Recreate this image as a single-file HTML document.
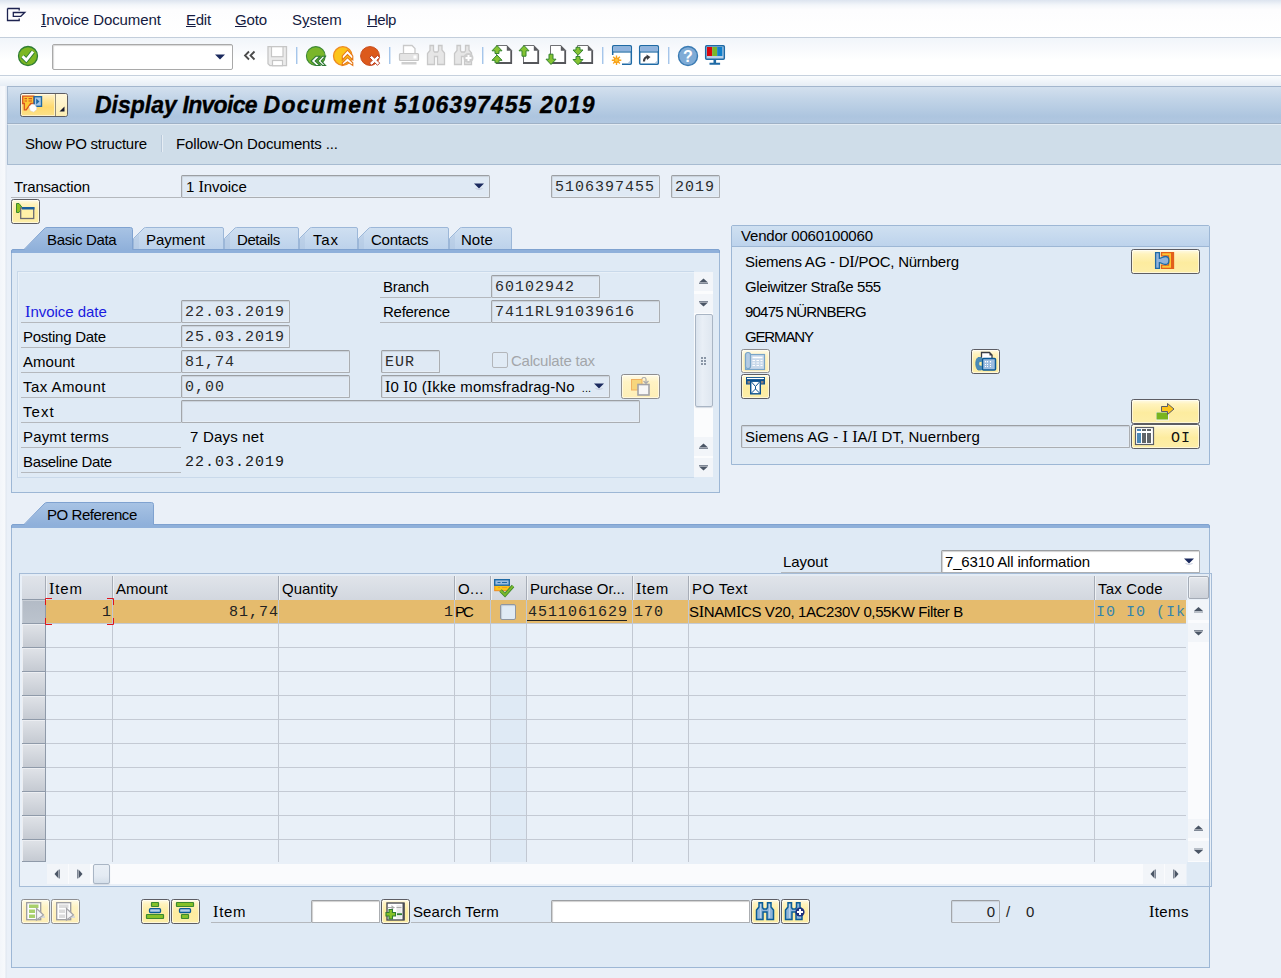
<!DOCTYPE html><html><head><meta charset="utf-8"><title>Display Invoice Document</title><style>
*{box-sizing:border-box;margin:0;padding:0}
html,body{width:1281px;height:978px;overflow:hidden}
body{position:relative;background:#eaf0f8;font-family:"Liberation Sans",sans-serif;font-size:15px;color:#000}
.a{position:absolute}
.i{font-family:"Liberation Serif",serif;font-size:16.2px;line-height:1px}
.t{position:absolute;white-space:nowrap;height:23px;line-height:23px;font-size:15px}
.m{font-family:"Liberation Mono",monospace;font-size:15px;letter-spacing:1px}
.t.m{padding-top:1px}
.lbl{position:absolute;white-space:nowrap;height:23px;line-height:23px;border-bottom:1px solid #b4b8bd;font-size:15px}
.f{position:absolute;height:23px;border:1px solid #abaeb2;border-top-color:#9c9fa3;border-left-color:#a3a6aa;border-radius:1.5px;background:#dfe9f4;box-shadow:inset 0 1px 1px #c9d1da, inset 1px 0 0 #d3dbe4, inset -1px -1px 0 #e6eef6;font-family:"Liberation Mono",monospace;font-size:15px;letter-spacing:1px;line-height:23.5px;padding-left:3px;white-space:nowrap;overflow:hidden;color:#2c2c2c}
.fs{font-family:"Liberation Sans",sans-serif;font-size:15px;letter-spacing:0;line-height:21px;color:#000}
.w{background:#fff;box-shadow:inset 1px 1px 1px #d0d0d0}
.btn{position:absolute;border:1px solid #5d5d63;border-radius:2.5px;background:linear-gradient(#fffbe6 0,#fff3bd 18%,#fdec9f 55%,#fdeea8 100%);box-shadow:inset 0 0 0 1px rgba(255,255,255,.55)}
.btn.dis{border-color:#8e8e90}
.btn svg{position:absolute;left:0;top:0}
.panel{position:absolute;background:#dfeaf5;border:1px solid #9db7d5}
.sep{position:absolute;width:2px;height:17px;top:47px;background:linear-gradient(90deg,#a6c6ea 50%,#d6e5f6 50%)}
.sbb{position:absolute;background:#f2f5f9}
.hd{position:absolute;top:576px;height:24px;background:linear-gradient(#e0e4ea,#d2d7df);border-left:1px solid #a7adb7;box-shadow:inset 1px 0 0 #eef1f4;line-height:25px;font-size:15px;white-space:nowrap;overflow:hidden;padding-left:3px}
.rs{position:absolute;left:22px;width:24px;height:24px;border-right:1px solid #8f9aa9;border-bottom:1px solid #8f9aa9;background:linear-gradient(#e0e3e8,#c5cad2);box-shadow:inset 1px 1px 0 #eceef2}
</style></head><body>
<div class="a" style="left:0;top:0;width:1281px;height:37px;background:linear-gradient(#dce4ef 0,#f3f6fa 5px,#fdfdfe 10px,#fff 100%)"></div>
<div class="a" style="left:0;top:37px;width:1281px;height:1px;background:#c3cedb"></div>
<div class="a" style="left:0;top:38px;width:1281px;height:37px;background:linear-gradient(#f1f5fa,#fff 60%)"></div>
<div class="a" style="left:0;top:75px;width:1281px;height:1px;background:#c6d1de"></div>
<div class="a" style="left:0;top:76px;width:1281px;height:10px;background:linear-gradient(#fafcfe,#e6edf5)"></div>
<div class="a" style="left:0;top:86px;width:7px;height:892px;background:linear-gradient(90deg,#f3f6fa 0,#f7f9fc 5px,#dfe6ef 6px,#e9eff7 7px)"></div>
<svg class="a" style="left:6px;top:7px" width="22" height="16" viewBox="0 0 22 16"><path d="M1.500 1.500h11.700v2M13.200 11.500v2H1.500V1.500" fill="none" stroke="#1d2350" stroke-width="1.300"></path><path d="M7.300 5.500h11.500l-4 3.800h-7.500z" fill="#fff" stroke="#1d2350" stroke-width="1.300"></path></svg>
<div class="t" style="left: 41px; top: 8px; color: rgb(20, 26, 64); letter-spacing: -0.094px;"><u><span class="i">I</span></u>nvoice Document</div>
<div class="t" style="left: 186px; top: 8px; color: rgb(20, 26, 64); letter-spacing: -0.265px;"><u>E</u>dit</div>
<div class="t" style="left: 235px; top: 8px; color: rgb(20, 26, 64); letter-spacing: -0.183px;"><u>G</u>oto</div>
<div class="t" style="left: 292px; top: 8px; color: rgb(20, 26, 64); letter-spacing: -0.039px;">S<u>y</u>stem</div>
<div class="t" style="left: 367px; top: 8px; color: rgb(20, 26, 64); letter-spacing: -0.519px;"><u>H</u>elp</div>
<svg class="a" style="left:17px;top:45px" width="22" height="22" viewBox="0 0 22 22"><circle cx="11" cy="11" r="9.500" fill="#7cb722" stroke="#2f7d35" stroke-width="1.300"></circle><path d="M5.500 11.300l3.800 3.800 6.700-8.400" fill="none" stroke="#2f7d35" stroke-width="4.600" stroke-linejoin="miter"></path><path d="M5.500 11.300l3.800 3.800 6.700-8.400" fill="none" stroke="#fff" stroke-width="2.800" stroke-linejoin="miter"></path></svg>
<div class="a" style="left:52px;top:44px;width:181px;height:26px;border:1px solid #a9a9a9;border-radius:2px;background:#fff;box-shadow:inset 1px 1px 1px #d8d8d8"></div>
<svg class="a" style="left:214px;top:53px" width="12" height="8" viewBox="0 0 12 8"><path d="M1 1.500h10L6 6.500z" fill="#1b2a5e"></path></svg>
<svg class="a" style="left:243px;top:50px" width="13" height="11" viewBox="0 0 13 11"><path d="M6 1.500L2 5.500 6 9.500M11.500 1.500L7.500 5.500l4 4" fill="none" stroke="#4a4a4a" stroke-width="1.800"></path></svg>
<svg class="a" style="left:267px;top:46px" width="21" height="21" viewBox="0 0 21 21"><path d="M1 .7h18.500v19H3L1 17.700z" fill="#ebebeb" stroke="#c6c6c6" stroke-width="1.3"></path><rect x="4.500" y=".7" width="11.500" height="10" fill="#fff" stroke="#c6c6c6" stroke-width="1.2"></rect><rect x="5.500" y="14.500" width="10" height="5.200" fill="#fff" stroke="#c6c6c6" stroke-width="1.2"></rect></svg>
<div class="sep" style="left:296px"></div>
<div class="sep" style="left:389px"></div>
<div class="sep" style="left:482px"></div>
<div class="sep" style="left:602px"></div>
<div class="sep" style="left:668px"></div>
<svg class="a" style="left:305px;top:45px" width="22" height="22" viewBox="0 0 22 22"><circle cx="10.800" cy="11" r="9.400" fill="#7ab62a" stroke="#3f8a36" stroke-width="1.100"></circle><path d="M11 11.200L6 16l5 4.500h4L10.200 16 15 11.200z M17.500 11.200L12.700 16l4.800 4.500h3L16.200 16l4.300-4.800z" fill="#fff" stroke="#2f7a35" stroke-width="1.100"></path></svg>
<svg class="a" style="left:332px;top:45px" width="22" height="22" viewBox="0 0 22 22"><circle cx="10.800" cy="11" r="9.300" fill="#fcc419" stroke="#ee8a22" stroke-width="1.300"></circle><path d="M15.500 5.200l5.300 5.800v4l-5.300-5.500-5.200 5.500v-4z M15.500 12.700l5.300 5.100v2.700l-5.300-3.700-5.200 3.700v-2.700z" fill="#fff" stroke="#e67817" stroke-width="1.100"></path></svg>
<svg class="a" style="left:359px;top:45px" width="22" height="22" viewBox="0 0 22 22"><circle cx="11" cy="11" r="9.400" fill="#dc5a1c" stroke="#c94c1b" stroke-width="1"></circle><path d="M10.500 12.600l2.200-2.200 2.900 2.800 2.900-2.800 2.200 2.200-2.800 2.700 2.800 2.800-2.200 2.200-2.900-2.800-2.900 2.800-2.200-2.200 2.800-2.800z" fill="#fff" stroke="#b3311a" stroke-width=".9"></path></svg>
<svg class="a" style="left:398px;top:44px" width="22" height="22" viewBox="0 0 22 22"><path d="M5.500 9V1.500h8.500l3 3V9" fill="#fff" stroke="#c9c9c9" stroke-width="1.3"></path><rect x="1.500" y="9.500" width="19" height="7" rx="1" fill="#e4e4e4" stroke="#c6c6c6" stroke-width="1.200"></rect><rect x="15.500" y="11.500" width="3" height="3" fill="#fff"></rect><rect x="3.500" y="18" width="15" height="2.500" fill="#cfcfcf"></rect></svg>
<svg class="a" style="left:426px;top:44px" width="20" height="22" viewBox="0 0 20 22"><path d="M4 1.500h3.500v5l1 1.500h3l1-1.500v-5h3.500v4.500l2.500 3V20.500h-7v-8h-3v8h-7V9.500l2.500-3z" fill="#e6e6e6" stroke="#c8c8c8" stroke-width="1.300"></path></svg>
<svg class="a" style="left:453px;top:44px" width="22" height="22" viewBox="0 0 22 22"><path d="M4 1.500h3.500v5l1 1.500h3l1-1.500v-5h3.500v4.500l2.500 3V20.500h-7v-8h-3v8h-7V9.500l2.500-3z" fill="#e6e6e6" stroke="#c8c8c8" stroke-width="1.300"></path><circle cx="15.500" cy="14" r="5" fill="#cdcdcd"></circle><path d="M12.500 14h6M15.500 11v6" stroke="#fff" stroke-width="2"></path></svg>
<svg class="a" style="left:491px;top:44px" width="22" height="22" viewBox="0 0 22 22"><path d="M5.500 1.500H16l5 5V19.500H5.500z" fill="#fff"></path><path d="M5.500 19V1.500H16" fill="none" stroke="#707175" stroke-width="1"></path><path d="M20.200 6.500V19H5" fill="none" stroke="#55565a" stroke-width="1.800"></path><path d="M15.800 1v5.700h5.700z" fill="#5b5c60"></path><path d="M0 0.5h12v10h-12z" fill="#fff" opacity=".0"></path><path d="M6 1.5l5 5.300h-3v2.7h-4v-2.7h-3z" fill="#85c232" stroke="#35852f" stroke-width="1" stroke-linejoin="round"></path><path d="M0 10h12v9.8h-12z" fill="#fff" opacity=".0"></path><path d="M6 11l5 5.300h-3v2.5h-4v-2.5h-3z" fill="#85c232" stroke="#35852f" stroke-width="1" stroke-linejoin="round"></path></svg>
<svg class="a" style="left:518px;top:44px" width="22" height="22" viewBox="0 0 22 22"><path d="M5.500 1.500H16l5 5V19.500H5.500z" fill="#fff"></path><path d="M5.500 19V1.500H16" fill="none" stroke="#707175" stroke-width="1"></path><path d="M20.200 6.500V19H5" fill="none" stroke="#55565a" stroke-width="1.800"></path><path d="M15.800 1v5.700h5.700z" fill="#5b5c60"></path><path d="M0 0.5h12v12.7h-12z" fill="#fff" opacity=".0"></path><path d="M6 1.5l5 5.300h-3v5.3999999999999995h-4v-5.3999999999999995h-3z" fill="#85c232" stroke="#35852f" stroke-width="1" stroke-linejoin="round"></path></svg>
<svg class="a" style="left:545px;top:44px" width="22" height="22" viewBox="0 0 22 22"><path d="M5.500 1.500H16l5 5V19.500H5.500z" fill="#fff"></path><path d="M5.500 19V1.500H16" fill="none" stroke="#707175" stroke-width="1"></path><path d="M20.200 6.500V19H5" fill="none" stroke="#55565a" stroke-width="1.800"></path><path d="M15.800 1v5.700h5.700z" fill="#5b5c60"></path><path d="M6 20.5l5-5.300h-3v-5.000000000000001h-4v5.000000000000001h-3z" fill="#85c232" stroke="#35852f" stroke-width="1" stroke-linejoin="round"></path></svg>
<svg class="a" style="left:572px;top:44px" width="22" height="22" viewBox="0 0 22 22"><path d="M5.500 1.500H16l5 5V19.500H5.500z" fill="#fff"></path><path d="M5.500 19V1.500H16" fill="none" stroke="#707175" stroke-width="1"></path><path d="M20.200 6.500V19H5" fill="none" stroke="#55565a" stroke-width="1.800"></path><path d="M15.800 1v5.700h5.700z" fill="#5b5c60"></path><path d="M6 11.3l5-5.300h-3v-2.7h-4v2.7h-3z" fill="#85c232" stroke="#35852f" stroke-width="1" stroke-linejoin="round"></path><path d="M6 20.8l5-5.300h-3v-3.000000000000001h-4v3.000000000000001h-3z" fill="#85c232" stroke="#35852f" stroke-width="1" stroke-linejoin="round"></path></svg>
<svg class="a" style="left:611px;top:44px" width="22" height="22" viewBox="0 0 22 22"><rect x="1.7" y="1.7" width="18.6" height="18.6" rx="1" fill="#fff" stroke="#1f6aa5" stroke-width="1.5"></rect><rect x="2.500" y="2.500" width="17" height="5" fill="#8fb3de"></rect><path d="M2 8h18" stroke="#1f6aa5" stroke-width="1.2"></path><rect x="0" y="11" width="11" height="11" fill="#fff"></rect><path d="M5.500 11.500v9.500M.800 16.200h9.500M2.200 12.800l6.700 6.700M8.900 12.800l-6.700 6.700" stroke="#f8a51b" stroke-width="1.400"></path><circle cx="5.500" cy="16.200" r="2.800" fill="#f89c1a"></circle><circle cx="5.500" cy="16.200" r="1.600" fill="#fdc534"></circle><path d="M17 19h2v-2" fill="none" stroke="#9db9d8" stroke-width="1"></path></svg>
<svg class="a" style="left:638px;top:44px" width="22" height="22" viewBox="0 0 22 22"><rect x="1.7" y="1.7" width="18.6" height="18.6" rx="1" fill="#fff" stroke="#1f6aa5" stroke-width="1.5"></rect><rect x="2.500" y="2.500" width="17" height="5" fill="#8fb3de"></rect><path d="M2 8h18" stroke="#1f6aa5" stroke-width="1.2"></path><path d="M6 17.500c0-3.500 1.500-4.500 4-4.500" fill="none" stroke="#3c3c40" stroke-width="2.200"></path><path d="M8.500 10.500l4 2.500-3.500 3z" fill="#3c3c40"></path><path d="M17 19h2v-2" fill="none" stroke="#9db9d8" stroke-width="1"></path></svg>
<svg class="a" style="left:677px;top:45px" width="22" height="22" viewBox="0 0 22 22"><circle cx="11" cy="11" r="9.500" fill="#7fabd6" stroke="#3a7bb3" stroke-width="1.400"></circle><text x="11" y="16.500" text-anchor="middle" font-family="Liberation Sans" font-weight="bold" font-size="16" fill="#fff">?</text></svg>
<svg class="a" style="left:704px;top:44px" width="22" height="22" viewBox="0 0 22 22"><rect x="1.700" y="1.700" width="18.600" height="13.600" rx="1" fill="#b9d1e9" stroke="#1f6aa5" stroke-width="1.500"></rect><rect x="3" y="3" width="5.200" height="9" fill="#d8060e"></rect><rect x="8.200" y="3" width="5" height="9" fill="#7ab62a"></rect><rect x="13.200" y="3" width="5.200" height="9" fill="#0f7fcb"></rect><path d="M9.500 15.500h2.600v3.300h4v1.900H5.500v-1.900h4z" fill="#1f6aa5"></path></svg>
<div class="a" style="left:7px;top:86px;width:1274px;height:38px;background:linear-gradient(#d3e0ee 0,#c3d5e8 30%,#adc5df 80%,#b2c8e1 100%);border-top:1px solid #a3b6cd;border-left:1px solid #a9bcd2"></div>
<div class="a" style="left:7px;top:123px;width:1274px;height:1px;background:#9fb1c6"></div>
<div class="a" style="left:7px;top:124px;width:1274px;height:41px;background:#cfdde9;border-top:1px solid #e3ebf3;border-left:1px solid #a9bcd2;border-bottom:1px solid #a7bbd1"></div>
<div class="btn" style="left:20px;top:93px;width:48px;height:24px;background:linear-gradient(#fff4cf 0,#ffe596 30%,#ffd96e 60%,#fbe18a 100%)"><div class="a" style="left:34px;top:0;width:12px;height:22px;border-radius:0 2px 2px 0;background:linear-gradient(#fff8dc,#fdeeb3);border-left:1px solid #8f8a7a;box-shadow:-1px 0 0 #fff3c4"></div><svg width="46" height="22" viewBox="0 0 46 22"><path d="M1.700 2.200H12.800V9.500H9.700L5.200 15.800H3.300V9.500H1.700z" fill="#fdc633" stroke="#d9531e" stroke-width="1.300"></path><path d="M3.500 4.600h2.500M7.500 4.600h3.500M3.500 7h2.500M7.500 7h3.500" stroke="#d9531e" stroke-width="1.100"></path><rect x="13.200" y="2.700" width="7.300" height="9.600" fill="#a9c8e8" stroke="#1f6aa5" stroke-width="1.400"></rect><path d="M15.200 4.500l3.300 3-3.300 3z" fill="#1f6aa5"></path><path d="M8 12.800l3-2.600 2.600.4 2 2.600v2.400l-3 2.400-3.200-1.200z" fill="#fff" stroke="#d4d4d8" stroke-width=".5"></path><path d="M38.500 17.500h5v-5z" fill="#16182c"></path></svg></div>
<div class="t" style="left: 95px; top: 90px; height: 30px; line-height: 30px; font-size: 23px; font-weight: bold; font-style: italic; color: rgb(0, 0, 0); -webkit-text-stroke: 0.35px rgb(0, 0, 0); letter-spacing: -0.004px;">Display</div>
<div class="t" style="left: 182.5px; top: 90px; height: 30px; line-height: 30px; font-size: 23px; font-weight: bold; font-style: italic; color: rgb(0, 0, 0); -webkit-text-stroke: 0.35px rgb(0, 0, 0); letter-spacing: -0.709px;">Invoice</div>
<div class="t" style="left: 263.5px; top: 90px; height: 30px; line-height: 30px; font-size: 23px; font-weight: bold; font-style: italic; color: rgb(0, 0, 0); -webkit-text-stroke: 0.35px rgb(0, 0, 0); letter-spacing: 1.356px;">Document</div>
<div class="t" style="left: 394px; top: 90px; height: 30px; line-height: 30px; font-size: 23px; font-weight: bold; font-style: italic; color: rgb(0, 0, 0); -webkit-text-stroke: 0.35px rgb(0, 0, 0); letter-spacing: 1.038px;">5106397455</div>
<div class="t" style="left: 540px; top: 90px; height: 30px; line-height: 30px; font-size: 23px; font-weight: bold; font-style: italic; color: rgb(0, 0, 0); -webkit-text-stroke: 0.35px rgb(0, 0, 0); letter-spacing: 1.157px;">2019</div>
<div class="t" style="left: 25px; top: 132px; letter-spacing: -0.241px;">Show PO structure</div>
<div class="a" style="left:161px;top:135px;width:1px;height:17px;background:#b9c9da"></div><div class="a" style="left:162px;top:135px;width:1px;height:17px;background:#e6edf4"></div>
<div class="t" style="left: 176px; top: 132px; letter-spacing: -0.142px;">Follow-On Documents ...</div>
<div class="lbl" style="left:11px;top:175px;width:170px;padding-left:3px"><span style="letter-spacing: -0.183px;">Transaction</span></div>
<div class="f fs" style="left:181px;top:175px;width:309px;padding-left:4px"><span style="letter-spacing: -0.052px;">1 <span class="i">I</span>nvoice</span></div>
<svg class="a" style="left:473px;top:182px" width="12" height="8" viewBox="0 0 12 8"><path d="M1 1.500h10L6 6.500z" fill="#1b2a5e"></path><path d="M2.500 6.500L6 7.500l3.500-1" fill="none" stroke="#c5cbdc" stroke-width="1"></path></svg>
<div class="f" style="left:551px;top:175px;width:109px">5106397455</div>
<div class="f" style="left:671px;top:175px;width:49px">2019</div>
<div class="btn" style="left:11px;top:199px;width:29px;height:25px"><svg width="27" height="23" viewBox="0 0 27 23"><path d="M4.500 3.500h2.500l3.500 4.500-3.500 4.500h-2.500z" fill="#8cc221" stroke="#3b8a2f" stroke-width="1"></path><rect x="8.700" y="8" width="13" height="10.500" fill="#fff0a8" stroke="#6b6b73" stroke-width="1.300"></rect><rect x="10" y="7" width="12.500" height="2.500" fill="#1a5f9e"></rect></svg></div>
<svg class="a" style="left:11px;top:227px" width="709" height="27" viewBox="0 0 709 27"><defs><linearGradient id="ga227" x1="0" y1="0" x2="0" y2="1"><stop offset="0" stop-color="#a8c3e4"></stop><stop offset="1" stop-color="#8fb0da"></stop></linearGradient><linearGradient id="gi227" x1="0" y1="0" x2="0" y2="1"><stop offset="0" stop-color="#cfdff1"></stop><stop offset="1" stop-color="#bcd2eb"></stop></linearGradient></defs><path d="M438.5 22.5V11.500L449 1q.5-.5 1.500-.5H499q1.500 0 1.500 1.500V22.500z" fill="url(#gi227)" stroke="#9cb7d8" stroke-width="1"></path><path d="M439 22V12l5-5v15z" fill="#a9c1de" opacity=".35"></path><path d="M347.5 22.5V11.500L358 1q.5-.5 1.500-.5H436q1.500 0 1.500 1.500V22.500z" fill="url(#gi227)" stroke="#9cb7d8" stroke-width="1"></path><path d="M348 22V12l5-5v15z" fill="#a9c1de" opacity=".35"></path><path d="M288.5 22.5V11.500L299 1q.5-.5 1.500-.5H345q1.500 0 1.500 1.500V22.500z" fill="url(#gi227)" stroke="#9cb7d8" stroke-width="1"></path><path d="M289 22V12l5-5v15z" fill="#a9c1de" opacity=".35"></path><path d="M213.5 22.5V11.500L224 1q.5-.5 1.500-.5H286q1.500 0 1.500 1.500V22.500z" fill="url(#gi227)" stroke="#9cb7d8" stroke-width="1"></path><path d="M214 22V12l5-5v15z" fill="#a9c1de" opacity=".35"></path><path d="M122.5 22.5V11.500L133 1q.5-.5 1.500-.5H211q1.500 0 1.500 1.500V22.500z" fill="url(#gi227)" stroke="#9cb7d8" stroke-width="1"></path><path d="M123 22V12l5-5v15z" fill="#a9c1de" opacity=".35"></path><path d="M0.500 27V24q0-1.500 1.500-1.500H707q1.500 0 1.500 1.500V27z" fill="#8fb0da"></path><path d="M0.500 27V24q0-1.500 1.500-1.500H707q1.500 0 1.500 1.500V27" fill="none" stroke="#7fa2d0" stroke-width="1"></path><path d="M13 23L33 2q1.200-1.500 3-1.500H119.5q2 0 2 2V23z" fill="url(#ga227)"></path><path d="M13 22.500L33 2q1.200-1.500 3-1.500H119.5q2 0 2 2V22.500" fill="none" stroke="#7fa2d0" stroke-width="1"></path></svg>
<div class="t" style="left: 47px; top: 228px; letter-spacing: -0.325px;">Basic Data</div>
<div class="t" style="left: 146px; top: 228px; letter-spacing: -0.058px;">Payment</div>
<div class="t" style="left: 237px; top: 228px; letter-spacing: -0.437px;">Details</div>
<div class="t" style="left: 313px; top: 228px; letter-spacing: 0.819px;">Tax</div>
<div class="t" style="left: 371px; top: 228px; letter-spacing: -0.238px;">Contacts</div>
<div class="t" style="left: 461px; top: 228px; letter-spacing: 0.028px;">Note</div>
<div class="panel" style="left:11px;top:253px;width:709px;height:240px;border-top:none"></div>
<div class="a" style="left:17px;top:271px;width:677px;height:207px;border:1px solid #c9d9ea;border-right:none;box-shadow:inset 1px 1px 0 #e8f0f8"></div>
<div class="a" style="left:694px;top:272px;width:19px;height:205px;background:#fbfcfd"></div>
<div class="sbb" style="left:694px;top:272px;width:19px;height:19px"><svg width="19" height="19" viewBox="0 0 19 19"><path d="M5.0 10.5L9.5 6.5 14.0 10.5z" fill="#4a5565"></path><path d="M5.0 11.5h9" stroke="#7f8896" stroke-width="1"></path></svg></div>
<div class="sbb" style="left:694px;top:294px;width:19px;height:19px"><svg width="19" height="19" viewBox="0 0 19 19"><path d="M5.0 8.5L9.5 12.5 14.0 8.5z" fill="#4a5565"></path><path d="M5.0 7.5h9" stroke="#7f8896" stroke-width="1"></path></svg></div>
<div class="a" style="left:695px;top:314px;width:18px;height:93px;box-shadow:0 1px 1px #d5dbe3;border:1px solid #a9b5c4;border-radius:2px;background:linear-gradient(90deg,#dbe4ee,#e9eff6 40%,#dfe7f0)"></div>
<div class="a" style="left:701px;top:357px;width:5px;height:8px;background:radial-gradient(circle at 1px 1px,#8a96a6 1px,transparent 1.200px) 0 0/3px 3px"></div>
<div class="sbb" style="left:694px;top:437px;width:19px;height:19px"><svg width="19" height="19" viewBox="0 0 19 19"><path d="M5.0 10.5L9.5 6.5 14.0 10.5z" fill="#4a5565"></path><path d="M5.0 11.5h9" stroke="#7f8896" stroke-width="1"></path></svg></div>
<div class="sbb" style="left:694px;top:458px;width:19px;height:19px"><svg width="19" height="19" viewBox="0 0 19 19"><path d="M5.0 8.5L9.5 12.5 14.0 8.5z" fill="#4a5565"></path><path d="M5.0 7.5h9" stroke="#7f8896" stroke-width="1"></path></svg></div>
<div class="lbl" style="left:21px;top:300px;width:160px"><span class="a" style="left: 4px; top: 0px; color: rgb(26, 26, 224); letter-spacing: -0.027px;"><span class="i">I</span>nvoice date</span></div>
<div class="lbl" style="left:21px;top:325px;width:160px"><span class="a" style="left: 2px; top: 0px; color: rgb(0, 0, 0); letter-spacing: -0.258px;">Posting Date</span></div>
<div class="lbl" style="left:21px;top:350px;width:160px"><span class="a" style="left: 2px; top: 0px; color: rgb(0, 0, 0); letter-spacing: 0.016px;">Amount</span></div>
<div class="lbl" style="left:21px;top:375px;width:160px"><span class="a" style="left: 2px; top: 0px; color: rgb(0, 0, 0); letter-spacing: 0.441px;">Tax Amount</span></div>
<div class="lbl" style="left:21px;top:400px;width:160px"><span class="a" style="left: 2px; top: 0px; color: rgb(0, 0, 0); letter-spacing: 1.071px;">Text</span></div>
<div class="lbl" style="left:21px;top:425px;width:160px"><span class="a" style="left: 2px; top: 0px; color: rgb(0, 0, 0); letter-spacing: 0.147px;">Paymt terms</span></div>
<div class="lbl" style="left:21px;top:450px;width:160px"><span class="a" style="left: 2px; top: 0px; color: rgb(0, 0, 0); letter-spacing: -0.354px;">Baseline Date</span></div>
<div class="lbl" style="left:380px;top:275px;width:111px"><span class="a" style="left: 3px; top: 0px; color: rgb(0, 0, 0); letter-spacing: -0.289px;">Branch</span></div>
<div class="lbl" style="left:380px;top:300px;width:111px"><span class="a" style="left: 3px; top: 0px; color: rgb(0, 0, 0); letter-spacing: -0.269px;">Reference</span></div>
<div class="f" style="left:181px;top:300px;width:109px">22.03.2019</div>
<div class="f" style="left:181px;top:325px;width:109px">25.03.2019</div>
<div class="f" style="left:181px;top:350px;width:169px">81,74</div>
<div class="f" style="left:181px;top:375px;width:169px">0,00</div>
<div class="f" style="left:181px;top:400px;width:459px"></div>
<div class="t" style="left: 190px; top: 425px; letter-spacing: 0.208px;">7 Days net</div>
<div class="t m" style="left:185px;top:450px;color:#1a1a1a">22.03.2019</div>
<div class="f" style="left:491px;top:275px;width:109px">60102942</div>
<div class="f" style="left:491px;top:300px;width:169px">7411RL91039616</div>
<div class="f" style="left:381px;top:350px;width:59px">EUR</div>
<div class="a" style="left:492px;top:352px;width:16px;height:16px;border:1px solid #b3b6ba;border-radius:2px;background:#e1ebf5"></div>
<div class="t" style="left: 511px; top: 349px; color: rgb(163, 166, 170); letter-spacing: -0.225px;">Calculate tax</div>
<div class="f fs" style="left:381px;top:375px;width:229px;padding-left:3px"><span style="letter-spacing: 0.137px;"><span class="i">I</span>0 <span class="i">I</span>0 (<span class="i">I</span>kke momsfradrag-No</span><span style="font-size:11px;margin-left:7px">...</span></div>
<svg class="a" style="left:593px;top:382px" width="12" height="8" viewBox="0 0 12 8"><path d="M1 1.500h10L6 6.500z" fill="#1b2a5e"></path><path d="M2.500 6.500L6 7.500l3.500-1" fill="none" stroke="#c5cbdc" stroke-width="1"></path></svg>
<div class="btn dis" style="left:621px;top:374px;width:39px;height:25px;background:linear-gradient(#fffbe8 0,#fff3c4 30%,#feefb6 100%)"><svg width="37" height="23" viewBox="0 0 37 23"><rect x="9.500" y="4.500" width="10.500" height="10.500" fill="#f7d67c" stroke="#f0b060" stroke-width="1"></rect><rect x="16" y="9.500" width="11" height="10.500" fill="#f6f6f6" stroke="#a2a2a6" stroke-width="1.600"></rect><path d="M20 4c0-2 4-2 4 0v3.500M21.500 6l2.500 2.500L26.500 6" fill="none" stroke="#a9a9ad" stroke-width="1.200"></path></svg></div>
<div class="panel" style="left:731px;top:225px;width:479px;height:240px;border-radius:2px 2px 0 0"></div>
<div class="a" style="left:732px;top:226px;width:477px;height:21px;background:linear-gradient(#cfe0f1,#bdd3ec);border-bottom:1px solid #9db7d5"></div>
<div class="t" style="left: 741px; top: 224px; letter-spacing: -0.197px;">Vendor 0060100060</div>
<div class="t" style="left: 745px; top: 250px; letter-spacing: -0.23px;">Siemens AG - D<span class="i">I</span>/POC, Nürnberg</div>
<div class="t" style="left: 745px; top: 275px; letter-spacing: -0.402px;">Gleiwitzer Straße 555</div>
<div class="t" style="left: 745px; top: 300px; letter-spacing: -0.78px;">90475 NÜRNBERG</div>
<div class="t" style="left: 745px; top: 325px; letter-spacing: -1.149px;">GERMANY</div>
<div class="btn" style="left:1131px;top:249px;width:69px;height:25px"><svg width="67" height="23" viewBox="0 0 67 23"><path d="M29.500 2.600H41.500V18.400H29.500V15.200H36.500V5.800H29.500z" fill="#fdc633" stroke="#e2601c" stroke-width="1.300"></path><path d="M40.200 2.600v15.800" stroke="#e2601c" stroke-width="2.400"></path><path d="M23.600 2.600h3.800v5.700c2 0 3.500-1.800 6-1.800 2.200 0 3.500 1.800 3.500 4s-1.300 4-3.500 4c-2.500 0-4-1.800-6-1.800v5.700h-3.800z" fill="#8fb3dc" stroke="#1f6aa5" stroke-width="1.300"></path></svg></div>
<div class="btn dis" style="left:741px;top:349px;width:29px;height:24px;background:linear-gradient(#fffbe8 0,#fff3c4 30%,#feefb6 100%)"><svg width="27" height="22" viewBox="0 0 27 22"><rect x="3.500" y="4.500" width="19" height="15" fill="#c9d9ea" stroke="#79a5c8" stroke-width="1.200"></rect><rect x="3.500" y="2.500" width="5" height="16" rx="2.200" fill="#b4cbe3" stroke="#79a5c8" stroke-width="1.200"></rect><path d="M10.500 7.500h10" stroke="#fff" stroke-width="1.500"></path><path d="M10.500 10.500h2.500M14.500 10.500h2.500M18.500 10.500h2M10.500 13h2.500M14.500 13h2.500M18.500 13h2M10.500 15.500h2.500M14.500 15.500h2.500M18.500 15.500h2" stroke="#fff" stroke-width="1.200"></path></svg></div>
<div class="btn" style="left:741px;top:374px;width:29px;height:25px"><svg width="27" height="23" viewBox="0 0 27 23"><rect x="4" y="2" width="19" height="7.500" fill="#0c518f"></rect><path d="M5 3.500h17" stroke="#fff" stroke-width="1.200"></path><rect x="5.500" y="6" width="2.500" height="2.500" fill="#8c7f78"></rect><rect x="19" y="6" width="2.500" height="2.500" fill="#8c7f78"></rect><rect x="8.700" y="6.200" width="9.600" height="12.600" fill="#fff" stroke="#0c518f" stroke-width="1.400"></rect><path d="M9.500 7l4 4.500 4-4.500M13.500 11.500v2.500l-4 4M13.500 14l4 4" fill="none" stroke="#0c518f" stroke-width="1"></path></svg></div>
<div class="btn" style="left:971px;top:349px;width:29px;height:25px"><svg width="27" height="23" viewBox="0 0 27 23"><path d="M9.500 8V2.500h8l2.500 2.500V8" fill="#fff" stroke="#3a3d44" stroke-width="1.300"></path><path d="M17.500 2.500v3h3z" fill="#3a3d44"></path><rect x="10.500" y="8.500" width="13" height="11.500" rx="1" fill="#9dbde0" stroke="#0a5a96" stroke-width="1.500"></rect><path d="M13.500 11v1.500M15.500 11v1.500M18.500 11v1.500" stroke="#fff" stroke-width="1.200"></path><path d="M13 14.500h1M15 14.500h1M18 14.500h1M13 16.500h1M15 16.500h1M18 16.500h1" stroke="#fff" stroke-width="1"></path><path d="M6 7.500c-3 2-3 10 0 12.500h3.500v-4h-2c-1-1.500-1-3 0-4.500h2v-4z" fill="#4a8bb8" stroke="#3b7fae" stroke-width=".8"></path></svg></div>
<div class="btn" style="left:1131px;top:399px;width:69px;height:25px"><svg width="67" height="23" viewBox="0 0 67 23"><rect x="24" y="12" width="13" height="8.500" fill="#f1f1f1"></rect><rect x="24.500" y="12.500" width="11.500" height="7" fill="#78b41f"></rect><path d="M29.500 6.500h6v-3l6.500 5.500-6.500 5.500v-3h-6z" fill="#fcc419" stroke="#5a5d68" stroke-width="1"></path></svg></div>
<div class="btn" style="left:1131px;top:424px;width:69px;height:25px"><svg width="67" height="23" viewBox="0 0 67 23"><rect x="3.500" y="2.500" width="18" height="17" fill="#fff" stroke="#5a5d66" stroke-width="1.200"></rect><rect x="5" y="4" width="4" height="2" fill="#4a87b5"></rect><rect x="5" y="8" width="4" height="10" fill="#4a87b5"></rect><rect x="10" y="4" width="4" height="2" fill="#606468"></rect><rect x="10" y="8" width="4" height="10" fill="#606468"></rect><rect x="15" y="4" width="4" height="2" fill="#606468"></rect><rect x="15" y="8" width="4" height="10" fill="#606468"></rect></svg><div class="t m" style="left:39px;top:1px;color:#111">OI</div></div>
<div class="f fs" style="left:741px;top:425px;width:389px;padding-left:3px"><span style="letter-spacing: 0.056px;">Siemens AG - <span class="i">I</span> <span class="i">I</span>A/<span class="i">I</span> DT, Nuernberg</span></div>
<svg class="a" style="left:11px;top:502px" width="1199" height="27" viewBox="0 0 1199 27"><defs><linearGradient id="ga502" x1="0" y1="0" x2="0" y2="1"><stop offset="0" stop-color="#a8c3e4"></stop><stop offset="1" stop-color="#8fb0da"></stop></linearGradient><linearGradient id="gi502" x1="0" y1="0" x2="0" y2="1"><stop offset="0" stop-color="#cfdff1"></stop><stop offset="1" stop-color="#bcd2eb"></stop></linearGradient></defs><path d="M0.500 27V24q0-1.500 1.500-1.500H1197q1.500 0 1.500 1.500V27z" fill="#8fb0da"></path><path d="M0.500 27V24q0-1.500 1.500-1.500H1197q1.500 0 1.500 1.500V27" fill="none" stroke="#7fa2d0" stroke-width="1"></path><path d="M13 23L33 2q1.200-1.500 3-1.500H140.5q2 0 2 2V23z" fill="url(#ga502)"></path><path d="M13 22.500L33 2q1.200-1.500 3-1.500H140.5q2 0 2 2V22.500" fill="none" stroke="#7fa2d0" stroke-width="1"></path></svg>
<div class="t" style="left: 47px; top: 503px; letter-spacing: -0.437px;">PO Reference</div>
<div class="panel" style="left:11px;top:528px;width:1199px;height:440px;border-top:none"></div>
<div class="lbl" style="left:781px;top:550px;width:161px"><span class="a" style="left: 2px; top: 0px; letter-spacing: -0.041px;">Layout</span></div>
<div class="f fs w" style="left:941px;top:550px;width:259px;padding-left:3px"><span style="letter-spacing: -0.165px;">7_6310 All information</span></div>
<svg class="a" style="left:1183px;top:557px" width="12" height="8" viewBox="0 0 12 8"><path d="M1 1.500h10L6 6.500z" fill="#1b2a5e"></path><path d="M2.500 6.500L6 7.500l3.500-1" fill="none" stroke="#c5cbdc" stroke-width="1"></path></svg>
<div class="a" style="left:19px;top:573px;width:1193px;height:314px;border:1px solid #a5bcd7;background:#e9f0f8"></div>
<div class="a" style="left:20px;top:574px;width:1191px;height:2px;background:#e4ecf5"></div>
<div class="hd" style="left:22px;width:23px;border-left:none;box-shadow:none"></div>
<div class="hd" style="left:45px;width:67px"><span style="letter-spacing: 0.848px;"><span class="i">I</span>tem</span></div>
<div class="hd" style="left:112px;width:166px"><span style="letter-spacing: 0.016px;">Amount</span></div>
<div class="hd" style="left:278px;width:176px"><span style="letter-spacing: -0.009px;">Quantity</span></div>
<div class="hd" style="left:454px;width:36px"><span style="letter-spacing: 0.407px;">O...</span></div>
<div class="hd" style="left:490px;width:36px"></div>
<div class="hd" style="left:526px;width:106px"><span style="letter-spacing: -0.077px;">Purchase Or...</span></div>
<div class="hd" style="left:632px;width:56px"><span style="letter-spacing: 0.598px;"><span class="i">I</span>tem</span></div>
<div class="hd" style="left:688px;width:406px"><span style="letter-spacing: 0.387px;">PO Text</span></div>
<div class="hd" style="left:1094px;width:93px"><span style="letter-spacing: 0.178px;">Tax Code</span></div>
<svg class="a" style="left:493px;top:578px" width="22" height="20" viewBox="0 0 22 20"><rect x="1.700" y="1.700" width="14.600" height="11" fill="#fcc419" stroke="#ee8a22" stroke-width="1"></rect><rect x="1.700" y="1.700" width="14.600" height="5.500" fill="#9dbde0" stroke="#1f6aa5" stroke-width="1.400"></rect><path d="M4.500 4.500h3M9 4.500h5" stroke="#1f6aa5" stroke-width="1"></path><path d="M5 9.500h2M9 9.500h5" stroke="#f0a020" stroke-width="1"></path><path d="M7.500 12.500l4.500 4.500 8-9" fill="none" stroke="#3f8a2f" stroke-width="3.400"></path><path d="M7.500 12.500l4.500 4.500 8-9" fill="none" stroke="#7cba2c" stroke-width="1.800"></path></svg>
<div class="a" style="left:1188px;top:576px;width:21px;height:23px;border:1px solid #a4abb6;border-radius:2px;background:linear-gradient(#e4e7ec,#ccd1d9);box-shadow:inset 1px 1px 0 #eef0f3"></div>
<div class="rs" style="top:600px;height:24px;background:linear-gradient(#b3bbc6,#bbc3cd);box-shadow:inset 1px 1px 0 #c9cfd7,0 -1px 0 #8f9aa9"></div>
<div class="a" style="left:46px;top:623px;width:1140px;height:1px;background:#c4cad4"></div>
<div class="rs" style="top:624px;height:24px"></div>
<div class="a" style="left:46px;top:647px;width:1140px;height:1px;background:#c4cad4"></div>
<div class="rs" style="top:648px;height:24px"></div>
<div class="a" style="left:46px;top:671px;width:1140px;height:1px;background:#c4cad4"></div>
<div class="rs" style="top:672px;height:24px"></div>
<div class="a" style="left:46px;top:695px;width:1140px;height:1px;background:#c4cad4"></div>
<div class="rs" style="top:696px;height:24px"></div>
<div class="a" style="left:46px;top:719px;width:1140px;height:1px;background:#c4cad4"></div>
<div class="rs" style="top:720px;height:24px"></div>
<div class="a" style="left:46px;top:743px;width:1140px;height:1px;background:#c4cad4"></div>
<div class="rs" style="top:744px;height:24px"></div>
<div class="a" style="left:46px;top:767px;width:1140px;height:1px;background:#c4cad4"></div>
<div class="rs" style="top:768px;height:24px"></div>
<div class="a" style="left:46px;top:791px;width:1140px;height:1px;background:#c4cad4"></div>
<div class="rs" style="top:792px;height:24px"></div>
<div class="a" style="left:46px;top:815px;width:1140px;height:1px;background:#c4cad4"></div>
<div class="rs" style="top:816px;height:24px"></div>
<div class="a" style="left:46px;top:839px;width:1140px;height:1px;background:#c4cad4"></div>
<div class="rs" style="top:840px;height:22px"></div>
<div class="a" style="left:46px;top:600px;width:1140px;height:23px;background:#e5bb6d"></div>
<div class="a" style="left:491px;top:624px;width:35px;height:238px;background:#dfeaf5"></div>
<div class="a" style="left:491px;top:647px;width:35px;height:1px;background:#c4cad4"></div>
<div class="a" style="left:491px;top:671px;width:35px;height:1px;background:#c4cad4"></div>
<div class="a" style="left:491px;top:695px;width:35px;height:1px;background:#c4cad4"></div>
<div class="a" style="left:491px;top:719px;width:35px;height:1px;background:#c4cad4"></div>
<div class="a" style="left:491px;top:743px;width:35px;height:1px;background:#c4cad4"></div>
<div class="a" style="left:491px;top:767px;width:35px;height:1px;background:#c4cad4"></div>
<div class="a" style="left:491px;top:791px;width:35px;height:1px;background:#c4cad4"></div>
<div class="a" style="left:491px;top:815px;width:35px;height:1px;background:#c4cad4"></div>
<div class="a" style="left:491px;top:839px;width:35px;height:1px;background:#c4cad4"></div>
<div class="a" style="left:112px;top:600px;width:1px;height:262px;background:#c2c8d2"></div>
<div class="a" style="left:278px;top:600px;width:1px;height:262px;background:#c2c8d2"></div>
<div class="a" style="left:454px;top:600px;width:1px;height:262px;background:#c2c8d2"></div>
<div class="a" style="left:490px;top:600px;width:1px;height:262px;background:#c2c8d2"></div>
<div class="a" style="left:526px;top:600px;width:1px;height:262px;background:#c2c8d2"></div>
<div class="a" style="left:632px;top:600px;width:1px;height:262px;background:#c2c8d2"></div>
<div class="a" style="left:688px;top:600px;width:1px;height:262px;background:#c2c8d2"></div>
<div class="a" style="left:1094px;top:600px;width:1px;height:262px;background:#c2c8d2"></div>
<svg class="a" style="left:45px;top:598px" width="69" height="27" viewBox="0 0 69 27"><path d="M7 .5H.5V7M.5 20v6.500H7M62 .5h6.500V7M68.500 20v6.500H62" fill="none" stroke="#e0141c" stroke-width="1"></path></svg>
<div class="t m" style="left:50px;top:600px;width:62px;text-align:right;color:#222">1</div>
<div class="t m" style="left:180px;top:600px;width:99px;text-align:right;color:#222">81,74</div>
<div class="t m" style="left:400px;top:600px;width:54px;text-align:right;color:#222">1</div>
<div class="t" style="left: 455px; top: 600px; letter-spacing: -2.022px;">PC</div>
<div class="a" style="left:500px;top:604px;width:16px;height:16px;border:1px solid #8f96a0;border-radius:2px;background:#e0ebf5;box-shadow:inset 1px 1px 1px #c3ccd6"></div>
<div class="t m" style="left:528px;top:600px;color:#222">4511061629</div>
<div class="a" style="left:527px;top:620px;width:100px;height:1px;background:#222"></div>
<div class="t m" style="left:634px;top:600px;color:#222">170</div>
<div class="t" style="left: 689px; top: 600px; letter-spacing: -0.372px;">S<span class="i">I</span>NAM<span class="i">I</span>CS V20, 1AC230V 0,55KW Filter B</div>
<div class="t m" style="left:1096px;top:600px;width:91px;overflow:hidden;color:#3684ad">I0 I0 (Ik</div>
<div class="a" style="left:1188px;top:600px;width:21px;height:262px;background:#fafbfd"></div>
<div class="sbb" style="left:1188px;top:600px;width:21px;height:20px"><svg width="21" height="20" viewBox="0 0 21 20"><path d="M6.0 11.0L10.5 7.0 15.0 11.0z" fill="#4a5565"></path><path d="M6.0 12.0h9" stroke="#7f8896" stroke-width="1"></path></svg></div>
<div class="sbb" style="left:1188px;top:623px;width:21px;height:19px"><svg width="21" height="19" viewBox="0 0 21 19"><path d="M6.0 8.5L10.5 12.5 15.0 8.5z" fill="#4a5565"></path><path d="M6.0 7.5h9" stroke="#7f8896" stroke-width="1"></path></svg></div>
<div class="sbb" style="left:1188px;top:819px;width:21px;height:19px"><svg width="21" height="19" viewBox="0 0 21 19"><path d="M6.0 10.5L10.5 6.5 15.0 10.5z" fill="#4a5565"></path><path d="M6.0 11.5h9" stroke="#7f8896" stroke-width="1"></path></svg></div>
<div class="sbb" style="left:1188px;top:841px;width:21px;height:20px"><svg width="21" height="20" viewBox="0 0 21 20"><path d="M6.0 9.0L10.5 13.0 15.0 9.0z" fill="#4a5565"></path><path d="M6.0 8.0h9" stroke="#7f8896" stroke-width="1"></path></svg></div>
<div class="a" style="left:47px;top:864px;width:1139px;height:20px;background:#fafbfd"></div>
<div class="sbb" style="left:47px;top:864px;width:21px;height:20px"><svg width="21" height="20" viewBox="0 0 21 20"><path d="M11.5 5.5L7.5 10.0 11.5 14.5z" fill="#4a5565"></path><path d="M12.5 5.5v9" stroke="#7f8896" stroke-width="1"></path></svg></div>
<div class="sbb" style="left:69px;top:864px;width:21px;height:20px"><svg width="21" height="20" viewBox="0 0 21 20"><path d="M9.5 5.5L13.5 10.0 9.5 14.5z" fill="#4a5565"></path><path d="M8.5 5.5v9" stroke="#7f8896" stroke-width="1"></path></svg></div>
<div class="a" style="left:93px;top:864px;width:17px;height:20px;border:1px solid #a9b5c4;border-radius:2px;background:linear-gradient(#e9eff6,#e4ebf3 60%,#d5dfea);box-shadow:0 1px 1px #d5dbe3"></div>
<div class="sbb" style="left:1143px;top:864px;width:21px;height:20px"><svg width="21" height="20" viewBox="0 0 21 20"><path d="M11.5 5.5L7.5 10.0 11.5 14.5z" fill="#4a5565"></path><path d="M12.5 5.5v9" stroke="#7f8896" stroke-width="1"></path></svg></div>
<div class="sbb" style="left:1165px;top:864px;width:21px;height:20px"><svg width="21" height="20" viewBox="0 0 21 20"><path d="M9.5 5.5L13.5 10.0 9.5 14.5z" fill="#4a5565"></path><path d="M8.5 5.5v9" stroke="#7f8896" stroke-width="1"></path></svg></div>
<div class="a" style="left:1187px;top:862px;width:24px;height:24px;background:#dfeaf5"></div>
<div class="a" style="left:1209px;top:574px;width:1px;height:312px;background:#a3bbd8"></div>
<div class="btn dis" style="left:21px;top:899px;width:29px;height:25px;background:linear-gradient(#fffbe8 0,#fff3c4 30%,#feefb6 100%)"><svg width="27" height="23" viewBox="0 0 27 23"><rect x="4.700" y="2.700" width="14" height="17" fill="#fff" stroke="#9a9a9e" stroke-width="1.300"></rect><rect x="7" y="4.500" width="9.500" height="3.500" fill="#a9d06b"></rect><rect x="7" y="9.500" width="6" height="3.500" fill="#a9d06b"></rect><rect x="7" y="14.500" width="6" height="3.500" fill="#a9d06b"></rect><rect x="17" y="16" width="6" height="2" fill="#d9d9d9"></rect><path d="M14.500 8.500v11.500l7-5z" fill="#f6f6f6" stroke="#a6a6aa" stroke-width="1.200"></path></svg></div>
<div class="btn dis" style="left:51px;top:899px;width:29px;height:25px;background:linear-gradient(#fffbe8 0,#fff3c4 30%,#feefb6 100%)"><svg width="27" height="23" viewBox="0 0 27 23"><rect x="4.700" y="2.700" width="14" height="17" fill="#fff" stroke="#9a9a9e" stroke-width="1.300"></rect><rect x="7" y="4.500" width="9.500" height="3.500" fill="#dcdcdc"></rect><rect x="7" y="9.500" width="6" height="3.500" fill="#dcdcdc"></rect><rect x="7" y="14.500" width="6" height="3.500" fill="#dcdcdc"></rect><rect x="17" y="16" width="6" height="2" fill="#d9d9d9"></rect><path d="M14.500 8.500v11.500l7-5z" fill="#f6f6f6" stroke="#a6a6aa" stroke-width="1.200"></path></svg></div>
<div class="btn" style="left:141px;top:899px;width:29px;height:25px"><svg width="27" height="23" viewBox="0 0 27 23"><rect x="9.500" y="2.500" width="7" height="4" rx=".5" fill="#86c127" stroke="#3b8a2f" stroke-width="1.200"></rect><rect x="7.500" y="8.700" width="11" height="3.800" rx="1" fill="#b5cde8" stroke="#0a5a96" stroke-width="1.300"></rect><rect x="4.500" y="14.500" width="17" height="4" rx=".5" fill="#86c127" stroke="#3b8a2f" stroke-width="1.200"></rect></svg></div>
<div class="btn" style="left:171px;top:899px;width:29px;height:25px"><svg width="27" height="23" viewBox="0 0 27 23"><rect x="4.500" y="2.500" width="17" height="4" rx=".5" fill="#86c127" stroke="#3b8a2f" stroke-width="1.200"></rect><rect x="7.500" y="8.700" width="11" height="3.800" rx="1" fill="#b5cde8" stroke="#0a5a96" stroke-width="1.300"></rect><rect x="9.500" y="14.500" width="7" height="4" rx=".5" fill="#86c127" stroke="#3b8a2f" stroke-width="1.200"></rect></svg></div>
<div class="lbl" style="left:211px;top:900px;width:100px"><span class="a" style="left: 2px; top: 0px; letter-spacing: 0.723px;"><span class="i">I</span>tem</span></div>
<div class="f w" style="left:311px;top:900px;width:69px"></div>
<div class="btn" style="left:381px;top:899px;width:29px;height:25px"><svg width="27" height="23" viewBox="0 0 27 23"><rect x="5" y="3" width="17" height="17" fill="#fff" stroke="#4b4d55" stroke-width="1.400"></rect><path d="M21.500 3v17" stroke="#4b4d55" stroke-width="2"></path><rect x="14.500" y="5" width="5" height="13.500" fill="#ececec"></rect><path d="M6 7.500h6.500M14.500 7.500h5" stroke="#aaa" stroke-width="1.200"></path><path d="M9.500 5l3 2.500-3 2.500z" fill="#aaa"></path><path d="M7 9.500h3.500v3h3v3.500h-3v3H7v-3H4v-3.500h3z" fill="#86c127" stroke="#2f7d32" stroke-width="1.100"></path><path d="M15 14.200h5" stroke="#2f7d32" stroke-width="1.800"></path></svg></div>
<div class="lbl" style="left:411px;top:900px;width:140px"><span class="a" style="left: 2px; top: 0px; letter-spacing: 0.094px;">Search Term</span></div>
<div class="f w" style="left:551px;top:900px;width:199px"></div>
<div class="btn" style="left:751px;top:899px;width:29px;height:25px"><svg width="27" height="23" viewBox="0 0 27 23"><path d="M7 2.700h3.500v4.800l1 1.500h3l1-1.500V2.700h3.500v4.300l2.500 3V19.500h-6.500v-7.500h-4v7.500H4.500V10l2.500-3z" fill="#8fb4d9" stroke="#0a5c96" stroke-width="1.500"></path><path d="M8.500 4v14M17.500 4v14" stroke="#b9d2ea" stroke-width="1.200"></path></svg></div>
<div class="btn" style="left:781px;top:899px;width:29px;height:25px"><svg width="27" height="23" viewBox="0 0 27 23"><path d="M6 2.700h3.500v4.800l1 1.500h3l1-1.500V2.700h3.500v4.300l2 3V19.500h-6v-7.500h-4v7.500H3.500V10l2.500-3z" fill="#8fb4d9" stroke="#0a5c96" stroke-width="1.500"></path><path d="M7.500 4v14" stroke="#b9d2ea" stroke-width="1.200"></path><circle cx="18" cy="12" r="4.600" fill="#1b2f7c"></circle><path d="M15 12h6M18 9v6" stroke="#fff" stroke-width="2"></path></svg></div>
<div class="f fs" style="left:951px;top:900px;width:49px;text-align:right;padding-right:4px;color:#222">0</div>
<div class="t" style="left:1006px;top:900px;color:#222">/</div>
<div class="t" style="left:1026px;top:900px;color:#222">0</div>
<div class="t" style="left: 1149px; top: 900px; letter-spacing: 0.379px;"><span class="i">I</span>tems</div>
</body></html>
